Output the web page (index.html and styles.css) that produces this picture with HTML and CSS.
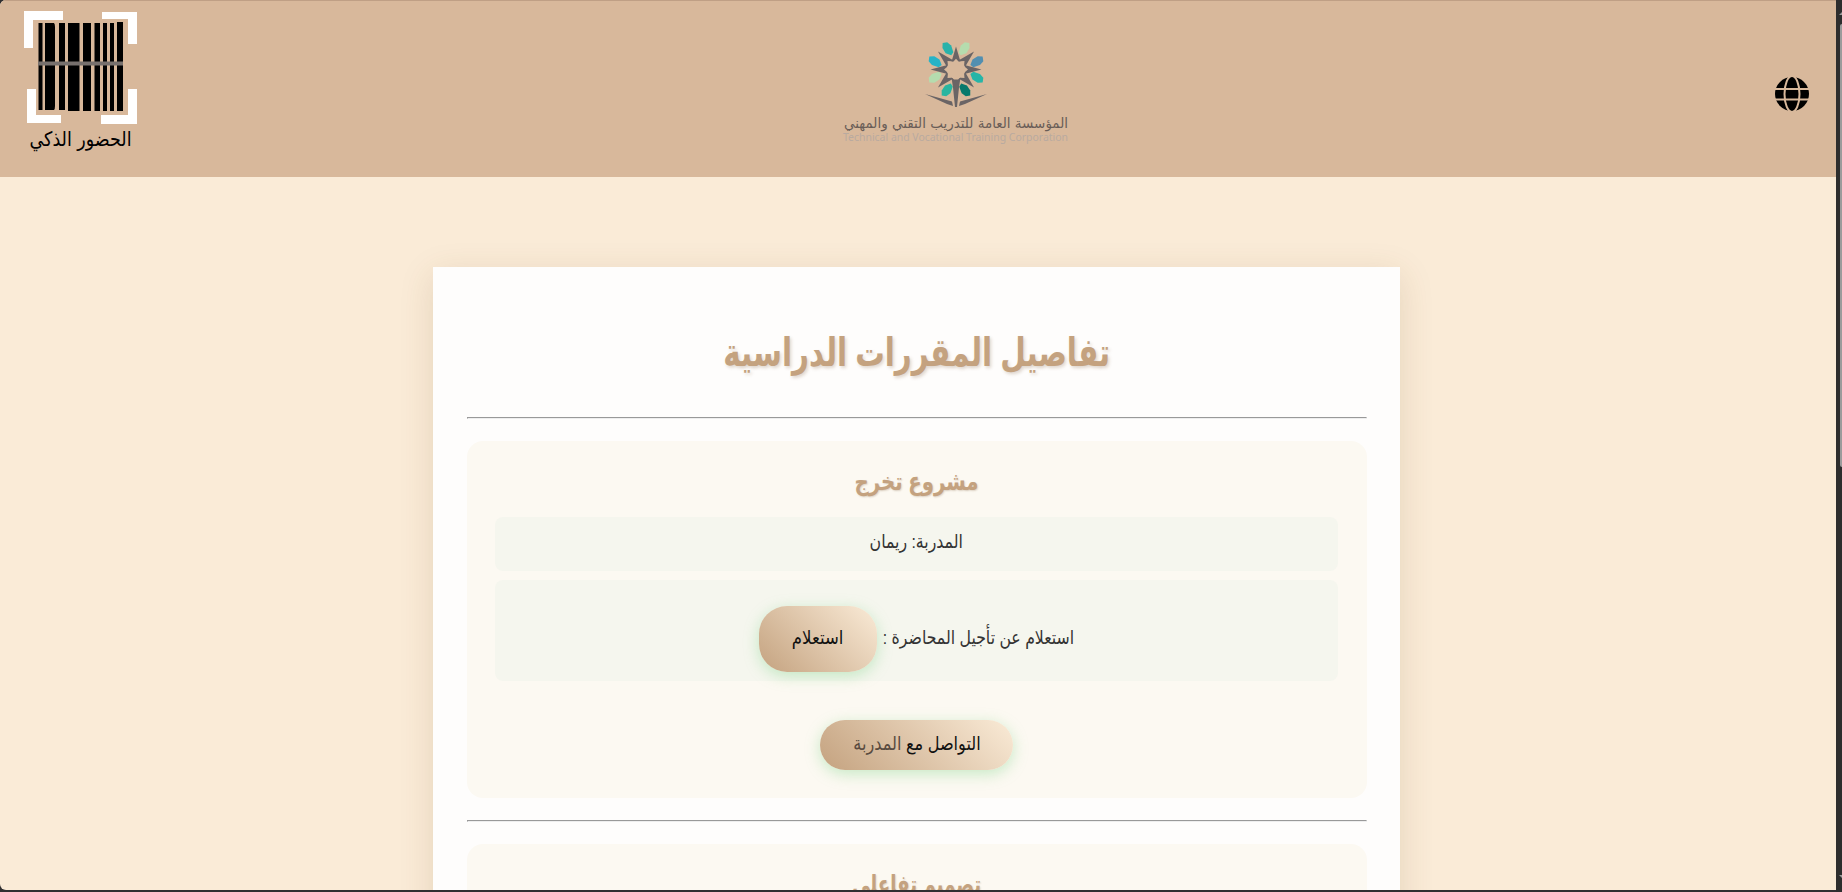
FILE: index.html
```html
<!DOCTYPE html>
<html lang="ar" dir="rtl">
<head>
<meta charset="utf-8">
<title>تفاصيل المقررات الدراسية</title>
<link rel="stylesheet" href="styles.css">
</head>
<body>
<div class="window">
  <div class="page">
    <header class="header">
      <svg class="globe" viewBox="0 0 34 34">
        <circle cx="17" cy="17" r="17"/>
        <g class="globe-lines"><ellipse cx="17" cy="17" rx="7.5" ry="18"/><path d="M0 12H34M0 22.500H34"/></g>
      </svg>
      <svg class="corporation" viewBox="0 0 270 150">
        <defs>
          <path id="petal" d="M-2.500-29.500 2-28.500 4.500-24 4-17 1-15-3.500-19-4.500-25z"/>
          <path id="petal-flip" d="M2.500-29.500-2-28.500-4.500-24-4-17-1-15 3.500-19 4.500-25z"/>
          <path id="spike" d="M0-25.500 4.500-8.500 2.500-9 0-12-2.500-9-4.500-8.500z"/>
        </defs>
        <g transform="translate(136 49.500)">
          <use href="#petal" fill="#29b2aa" transform="rotate(-22)"/>
          <use href="#petal-flip" fill="#b5dcae" transform="rotate(22)"/>
          <use href="#petal-flip" fill="#26b3c7" transform="rotate(-69)"/>
          <use href="#petal" fill="#528fb0" transform="rotate(69)"/>
          <use href="#petal" fill="#b5dcae" transform="rotate(-111)"/>
          <use href="#petal-flip" fill="#26b5a7" transform="rotate(111)"/>
          <use href="#petal-flip" fill="#29b5a0" transform="rotate(-156)"/>
          <use href="#petal" fill="#08796c" transform="rotate(156)"/>
          <g class="star">
            <use href="#spike" transform="scale(1 .9)"/>
            <use href="#spike" transform="rotate(45)"/>
            <use href="#spike" transform="rotate(90)"/>
            <use href="#spike" transform="rotate(135)"/>
            <use href="#spike" transform="rotate(-45)"/>
            <use href="#spike" transform="rotate(-90)"/>
            <use href="#spike" transform="rotate(-135)"/>
            <path d="M-4.500 8-2 10H2L4.500 8 3 18 1 37.500H-1L-3 18zM-31 24.500-4 32-3 36.500-9 34.500zM31 24.500 4 32 3 36.500 9 34.500z"/>
          </g>
        </g>
        <text class="corp-ar" x="136" y="107.500" textLength="224" lengthAdjust="spacingAndGlyphs">المؤسسة العامة للتدريب التقني والمهني</text>
        <text class="corp-en" x="135.500" y="121" textLength="225" lengthAdjust="spacingAndGlyphs">Technical and Vocational Training Corporation</text>
      </svg>
      <svg class="attendance" viewBox="0 0 120 150">
        <path class="frame" d="M0 0H39V9H9V37H0zM78 1H113V33H104V8H78zM3 78H12V104H37V112H3zM104 78H113V113H77V104H104z"/>
        <path d="M14.500 12h4v87h-4zM21 12h9q1 1 1 4v79q0 3-1 4h-9zM35 12h6v87h-6zM44 12h11.500v88h-11.500zM59 12h8v88h-8zM70.500 12h5.500v88h-5.500zM79 12h4v88h-4zM86 12h4v88h-4zM93 11h6v89h-6z"/>
        <path class="scan" d="M14 52.500H99"/>
        <text class="attendance-text" x="56.500" y="135" textLength="102" lengthAdjust="spacingAndGlyphs">الحضور الذكي</text>
      </svg>
    </header>
    <main class="card">
      <h1 class="title"><span>تفاصيل المقررات الدراسية</span></h1>
      <hr class="rule">
      <section class="course">
        <h2 class="course-title"><span>مشروع تخرج</span></h2>
        <p class="row trainer"><span>المدربة: ريمان</span></p>
        <div class="row inquiry"><div class="question"><span>استعلام عن تأجيل المحاضرة :</span></div><button class="btn ask"><span>استعلام</span></button></div>
        <button class="btn contact"><span>التواصل مع <span class="faded">المدربة</span></span></button>
      </section>
      <hr class="rule">
      <section class="course">
        <h2 class="course-title interactive"><span>تصميم تفاعلي</span></h2>
      </section>
    </main>
  </div>
  <div class="scrollbar">
    <div class="arrow up"></div>
    <div class="thumb"></div>
    <div class="arrow down"></div>
  </div>
</div>
</body>
</html>
```
FILE: styles.css
```css
* { box-sizing: border-box; }
body { margin: 0; background: #302f31; font-family: "Liberation Sans", "DejaVu Sans", sans-serif; overflow: hidden; }
.window { display: flex; direction: ltr; width: 1842px; height: 892px; padding-bottom: 2px; }
.page { direction: rtl; width: 1836px; height: 890px; overflow: hidden; background: #faebd7; border-radius: 6px 0 0 6px; }
.header { display: flex; justify-content: space-between; align-items: flex-start; height: 177px; background: #d8b89b; border-top: 1px solid #bf9f85; padding: 0 27px 0 24px; }
.globe { width: 34px; height: 34px; margin-top: 76px; }
.globe-lines { fill: none; stroke: #d8b89b; stroke-width: 2; }
.corporation { width: 270px; height: 150px; margin: 19px 10px 0 0; }
.star { fill: #6a6465; }
.corp-ar { font: 14px "DejaVu Sans", sans-serif; fill: #695d57; text-anchor: middle; }
.corp-en { font: 10.5px "Noto Sans", sans-serif; fill: #b9aaa0; text-anchor: middle; direction: ltr; }
.attendance { width: 120px; height: 150px; margin-top: 10px; overflow: visible; }
.frame { fill: #fff; }
.scan { stroke: #77706d; stroke-width: 4; }
.attendance-text { font: 20px "DejaVu Sans", sans-serif; text-anchor: middle; }
.card { width: 967px; height: 900px; margin: 90px 436px 0 0; padding: 56px 33px 0 34px; background: #fefdfc; box-shadow: 0 8px 32px rgba(110, 75, 30, .15); text-align: center; }
h1, h2, p { margin: 0; }
h1 span, h2 span, .trainer span, .question span, .btn > span { display: inline-block; white-space: nowrap; }
.title { height: 94px; line-height: 60px; font-size: 39px; color: #c4a27f; text-shadow: 2px 2px 4px rgba(100, 60, 20, .2); }
.title span { transform: scaleX(.754); }
.rule { height: 2px; margin: 0; border: 1px solid; border-color: #999 #eee #eee #999; }
.course { height: 357px; margin: 22px 0 22px; padding: 16px 29px 0 28px; background: #fcf9f2; border-radius: 16px; }
.course-title { height: 60px; line-height: 48px; font-size: 25px; color: #c4a27f; text-shadow: 1px 1px 2px rgba(100, 60, 20, .2); }
.course-title span { transform: scaleX(.79); }
.interactive span { transform: scaleX(.73); }
.row { border-radius: 8px; background: #f5f6ee; color: #333; font-size: 19px; }
.trainer { height: 54px; line-height: 49px; }
.trainer span { transform: scaleX(.83); }
.inquiry { display: flex; justify-content: center; align-items: flex-start; gap: 6px; height: 101px; margin-top: 9px; padding-top: 26px; }
.question { display: flex; justify-content: center; width: 191px; line-height: 64px; }
.question span { flex-shrink: 0; transform: scaleX(.828); }
.btn { border: 0; color: #111; font: 19px "Liberation Sans", "DejaVu Sans", sans-serif; background: linear-gradient(45deg, #c4a27f, #faebd7); box-shadow: 0 4px 15px rgba(120, 210, 130, .4); white-space: nowrap; padding: 0; }
.ask { width: 118px; height: 66px; border-radius: 28px; padding-bottom: 4px; }
.ask span { transform: scaleX(.87); }
.contact { display: block; width: 193px; height: 50px; border-radius: 25px; margin: 39px auto 0; padding-bottom: 4px; }
.contact > span { transform: scaleX(.85); }
.faded { color: #594b40; }
.scrollbar { display: flex; flex-direction: column; align-items: flex-end; width: 6px; height: 892px; background: #2d2d2d; }
.arrow { width: 3px; height: 3px; background: #9a9a9a; }
.up { margin-top: 12px; clip-path: polygon(100% 0, 100% 100%, 0 100%); }
.thumb { width: 2px; height: 443px; margin-top: 9px; background: #9b9b9b; border-radius: 2px 0 0 2px; }
.down { margin-top: 408px; clip-path: polygon(0 0, 100% 0, 100% 100%); }
```
